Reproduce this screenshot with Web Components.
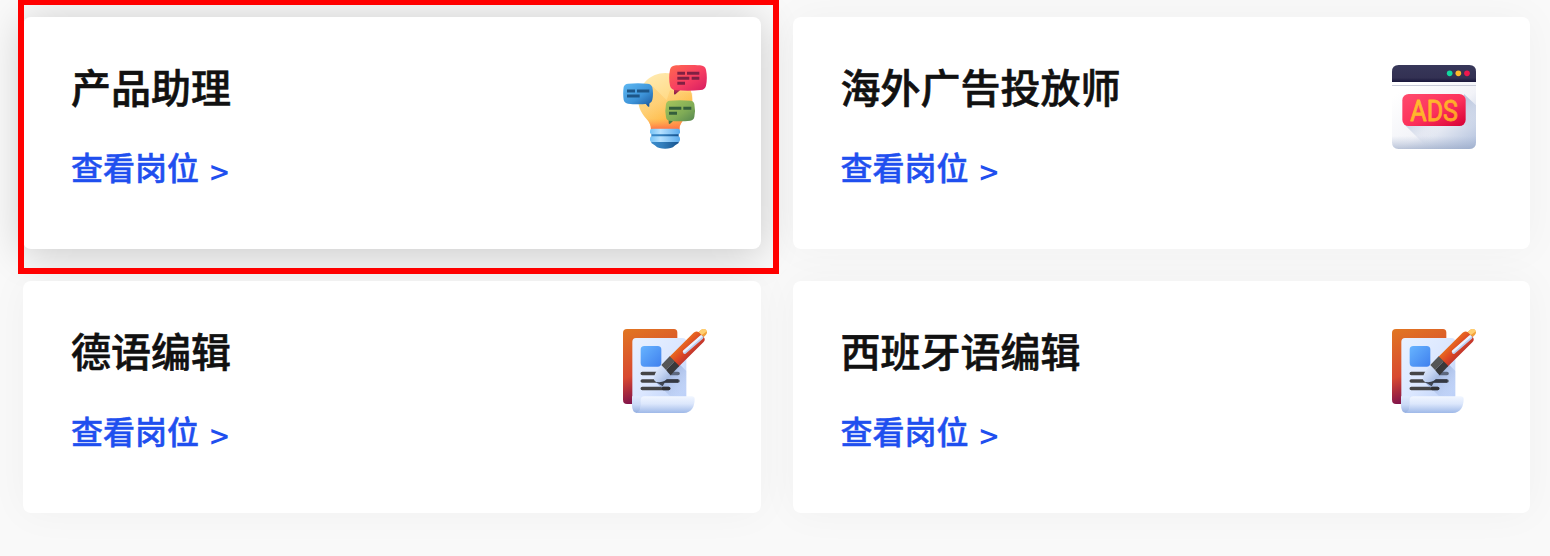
<!DOCTYPE html>
<html lang="zh-CN">
<head>
<meta charset="utf-8">
<title>岗位</title>
<style>
html,body{margin:0;height:556px;overflow:hidden;background:#f9f9f9}
body{font-family:"Noto Sans CJK SC",sans-serif}
</style>
</head>
<body>
<job-board>
  <job-card active><span slot="title">产品助理</span><job-icon slot="icon" kind="idea"></job-icon></job-card>
  <job-card><span slot="title">海外广告投放师</span><job-icon slot="icon" kind="ads"></job-icon></job-card>
  <job-card><span slot="title">德语编辑</span><job-icon slot="icon" kind="edit"></job-icon></job-card>
  <job-card><span slot="title">西班牙语编辑</span><job-icon slot="icon" kind="edit"></job-icon></job-card>
</job-board>

<template id="t-idea">
<svg viewBox="24 21 252 252">
  <defs>
    <linearGradient id="bulb" x1="0.15" y1="0.1" x2="0.65" y2="1"><stop offset="0" stop-color="#ffe9ad"/><stop offset=".45" stop-color="#ffdb8a"/><stop offset=".75" stop-color="#ffc050"/><stop offset="1" stop-color="#ff8a4a"/></linearGradient>
    <linearGradient id="neck" x1="0" y1="0" x2="0" y2="1"><stop offset="0" stop-color="#ff9a50" stop-opacity="0"/><stop offset="1" stop-color="#ff7045"/></linearGradient>
    <linearGradient id="shade" x1="0" y1="0" x2="1" y2="1"><stop offset="0" stop-color="#fdc566" stop-opacity=".5"/><stop offset="1" stop-color="#ffb441" stop-opacity=".15"/></linearGradient>
    <linearGradient id="red" x1="0" y1="0" x2="1" y2="1"><stop offset="0" stop-color="#ff6a4f"/><stop offset=".55" stop-color="#f73e62"/><stop offset="1" stop-color="#d51c62"/></linearGradient>
    <linearGradient id="rtail" x1="0" y1="0" x2="0" y2="1"><stop offset="0" stop-color="#ed4559"/><stop offset="1" stop-color="#7e1749"/></linearGradient>
    <linearGradient id="blue" x1="0" y1="0" x2="1" y2="1"><stop offset="0" stop-color="#5fb9f3"/><stop offset=".6" stop-color="#3d93d8"/><stop offset="1" stop-color="#1e5ca0"/></linearGradient>
    <linearGradient id="green" x1="0" y1="0" x2="1" y2="1"><stop offset="0" stop-color="#a9c75d"/><stop offset=".6" stop-color="#7fab56"/><stop offset="1" stop-color="#568750"/></linearGradient>
    <linearGradient id="ring" x1="0" y1="0" x2="1" y2="0"><stop offset="0" stop-color="#75c2f5"/><stop offset=".35" stop-color="#b6e1ff"/><stop offset="1" stop-color="#5aabed"/></linearGradient>
    <linearGradient id="base" x1="0" y1="0" x2="1" y2="0"><stop offset="0" stop-color="#398acb"/><stop offset=".4" stop-color="#327ebc"/><stop offset="1" stop-color="#17538e"/></linearGradient>
  </defs>
  <path fill="url(#bulb)" d="M151 45C106 45 70 80 70 126C70 151 80 166 94 182C104 193 108 201 108 215H193C193 201 199 193 209 182C224 165 232 149 232 125C232 79 196 45 151 45Z"/>
  <path fill="url(#shade)" d="M112 84L155 127L165 96L232 105V126C232 149 224 165 209 182C199 193 193 201 193 215H108C108 201 104 193 94 182C82 168 75 155 72 140L100 136Z"/>
  <path fill="url(#neck)" d="M94 182H209C199 193 193 201 193 215H108C108 201 104 193 94 182Z"/>
  <path fill="url(#base)" d="M109 220H191V255C187 259 181 260 178 264C170 275 131 275 122 264C119 260 113 259 109 255Z"/>
  <rect x="105" y="212" width="90" height="17" rx="6" fill="url(#ring)"/>
  <rect x="105" y="235" width="90" height="17" rx="6" fill="url(#ring)"/>
  <path fill="url(#rtail)" d="M177 86V106Q177 112 182 108L196 96Z"/>
  <path fill="url(#red)" d="M183 22Q219 19 255 22Q270 23 273 35Q278 59 273 83Q270 95 257 96Q218 100 181 96Q168 95 165 83Q160 59 165 35Q168 23 183 22Z"/>
  <path fill="#1e5ca0" d="M88 132L98 145Q103 149 103 143V133Z"/>
  <path fill="url(#blue)" d="M39 77Q69 74 97 77Q109 78 112 88Q116 107 112 125Q109 136 98 137Q68 141 39 137Q29 136 26 126Q23 106 26 87Q29 78 39 77Z"/>
  <path fill="#467846" d="M161 183V195Q162 201 167 196L178 185Z"/>
  <path fill="url(#green)" d="M164 128Q195 125 227 128Q236 129 238 138Q242 158 238 177Q236 187 226 188Q194 191 163 188Q154 187 153 177Q149 158 153 138Q155 129 164 128Z"/>
  <path stroke="#802043" stroke-width="9" d="M187 45.500H210M216 45.500H253M187 60.500H223M230 60.500H253M187 75.500H210"/>
  <path stroke="#1d5688" stroke-width="9" d="M36 99H60M66 99H103M36 114H74"/>
  <path stroke="#345e3c" stroke-width="9" d="M162 150.500H199M205 150.500H229M162 165.500H186"/>
</svg>
</template>

<template id="t-ads">
<svg viewBox="24 21 252 252">
  <defs>
    <linearGradient id="page" x1="0.15" y1="0.1" x2="1" y2="1"><stop offset="0" stop-color="#fff"/><stop offset=".5" stop-color="#f2f3f8"/><stop offset="1" stop-color="#afbfdc"/></linearGradient>
    <linearGradient id="foot" x1="0" y1="0" x2="0" y2="1"><stop offset="0" stop-color="#a4b4d2" stop-opacity="0"/><stop offset="1" stop-color="#94a4c2" stop-opacity=".6"/></linearGradient>
    <linearGradient id="bar" x1="0" y1="0" x2="0" y2="1"><stop offset="0" stop-color="#373759"/><stop offset=".75" stop-color="#333153"/><stop offset="1" stop-color="#19173b"/></linearGradient>
    <linearGradient id="tag" x1="0" y1="0" x2="1" y2="1"><stop offset="0" stop-color="#ff4b6d"/><stop offset=".55" stop-color="#fc315b"/><stop offset="1" stop-color="#d60035"/></linearGradient>
    <linearGradient id="gold" x1="0" y1="0" x2="1" y2="1"><stop offset="0" stop-color="#ffc52f"/><stop offset="1" stop-color="#ff9c24"/></linearGradient>
    <linearGradient id="fade" gradientUnits="userSpaceOnUse" x1="60" y1="200" x2="130" y2="262"><stop offset="0" stop-color="#c2cce0" stop-opacity=".85"/><stop offset="1" stop-color="#cdd6e8" stop-opacity="0"/></linearGradient>
    <linearGradient id="fade2" gradientUnits="userSpaceOnUse" x1="240" y1="130" x2="276" y2="205"><stop offset="0" stop-color="#bac6de" stop-opacity=".9"/><stop offset="1" stop-color="#bccae2" stop-opacity="0"/></linearGradient>
  </defs>
  <path fill="url(#page)" d="M24 68H276V253Q276 273 256 273H44Q24 273 24 253Z"/>
  <path fill="url(#fade)" d="M59 197L135 273H240V200Z"/>
  <path fill="url(#fade2)" d="M240 108L276 142V220L240 200Z"/>
  <path fill="url(#foot)" d="M24 234H276V253Q276 273 256 273H44Q24 273 24 253Z"/>
  <path fill="url(#bar)" d="M44 21H256Q276 21 276 41V72H24V41Q24 21 44 21Z"/>
  <path stroke="#c8cbd8" stroke-width="3" d="M24 82.500H276"/>
  <circle cx="197" cy="46" r="8.500" fill="#11d9a0"/><circle cx="223" cy="46" r="8.500" fill="#ffba29"/><circle cx="249" cy="46" r="8.500" fill="#ed174e"/>
  <rect x="55" y="108" width="190" height="96" rx="19" fill="url(#tag)"/>
  <text x="79" y="188" textLength="143" lengthAdjust="spacingAndGlyphs" font-family="Roboto,sans-serif" font-weight="400" font-size="90" fill="url(#gold)" stroke="url(#gold)" stroke-width="2.500" stroke-linejoin="round">ADS</text>
</svg>
</template>

<template id="t-edit">
<svg viewBox="24 21 252 252">
  <defs>
    <linearGradient id="back" x1="0.1" y1="0" x2="0.35" y2="1"><stop offset="0" stop-color="#e17522"/><stop offset=".6" stop-color="#d84931"/><stop offset=".78" stop-color="#ab2c3d"/><stop offset="1" stop-color="#730d50"/></linearGradient>
    <linearGradient id="paper" x1="0" y1="0" x2="1" y2="1"><stop offset="0" stop-color="#e8f1ff"/><stop offset=".5" stop-color="#dbe7ff"/><stop offset="1" stop-color="#b8cdf7"/></linearGradient>
    <linearGradient id="roll" x1="0" y1="0" x2="0" y2="1"><stop offset="0" stop-color="#f1f6ff"/><stop offset=".45" stop-color="#dce7fc"/><stop offset="1" stop-color="#9fb9e8"/></linearGradient>
    <linearGradient id="curl" x1="0" y1="0" x2="0" y2="1"><stop offset="0" stop-color="#dfeafd"/><stop offset=".5" stop-color="#cad9f6"/><stop offset="1" stop-color="#92addf"/></linearGradient>
    <linearGradient id="pic" x1="0" y1="0" x2="1" y2="1"><stop offset="0" stop-color="#67b4ff"/><stop offset="1" stop-color="#3f80ee"/></linearGradient>
    <linearGradient id="pen" gradientUnits="userSpaceOnUse" x1="195" y1="65" x2="232" y2="102"><stop offset="0" stop-color="#ea7320"/><stop offset=".5" stop-color="#df4a24"/><stop offset="1" stop-color="#b9302f"/></linearGradient>
    <linearGradient id="nib" x1="0" y1="0" x2="1" y2="1"><stop offset="0" stop-color="#e9f1ff"/><stop offset=".5" stop-color="#c4d4f2"/><stop offset="1" stop-color="#93abd8"/></linearGradient>
    <linearGradient id="drop" gradientUnits="userSpaceOnUse" x1="140" y1="160" x2="205" y2="215"><stop offset="0" stop-color="#6985bd" stop-opacity=".6"/><stop offset="1" stop-color="#a7bfeb" stop-opacity=".05"/></linearGradient>
  </defs>
  <path fill="url(#back)" d="M36 21H177Q187 21 187 32V246H36Q24 246 24 233V33Q24 21 36 21Z"/>
  <path fill="url(#paper)" d="M63 48H202Q214 48 214 60V251H52V60Q52 48 63 48Z"/>
  <rect x="77" y="72" width="62" height="62" rx="11" fill="url(#pic)"/>
  <path stroke="#454547" stroke-width="11" stroke-linecap="round" d="M82 154.500H189M82 177H189M82 199.500H161"/>
  <path fill="url(#drop)" d="M124 182L187 120L214 147V222H165Z"/>
  <path fill="#2d3038" fill-opacity=".85" d="M124 181L149 172H189Q194 177 189 182H149L143 193Z"/>
  <path stroke="#303034" stroke-width="10" stroke-linecap="round" d="M145 199.500H161"/>
  <path fill="url(#curl)" d="M51 223H78V250Q78 273 65 273Q51 271 51 250Z"/>
  <path fill="url(#roll)" d="M88 223H230Q239 223 239 231C239 253 230 273 206 273H64Q77 268 77 250V234Q77 223 88 223Z"/>
  <path fill="url(#nib)" d="M140 131L166 159L157 169Q151 179 133 181L123 180L117 174Q118 152 129 142Z"/>
  <path fill="#f3a23a" d="M246 34L259 23Q267 18 273 24Q279 31 273 38L261 50Z"/>
  <path fill="#ffcf71" d="M251 30L259 23Q267 18 273 24Q278 28 272 31L256 42Z"/>
  <path fill="url(#pen)" d="M162 106L235 33Q243 24 253 32L266 45Q273 53 265 61L190 135Z"/>
  <path fill="#565656" d="M139 129L164 103L179 118L153 144Z"/>
  <path fill="#39393b" d="M153 144L179 118L193 132L167 160Z"/>
  <path stroke="#bdcef0" stroke-width="11" stroke-linecap="round" d="M209 90L260 46"/>
  <path stroke="#eaf2ff" stroke-width="7" stroke-linecap="round" d="M207 88L258 43"/>
</svg>
</template>

<script>
class JobIcon extends HTMLElement {
  connectedCallback() {
    if (this.shadowRoot) return;
    const root = this.attachShadow({mode: 'open'});
    root.innerHTML = '<style>:host{display:block;width:84px;height:84px}svg{display:block;width:100%;height:100%;fill:none}</style>';
    root.append(document.getElementById('t-' + this.getAttribute('kind')).content.cloneNode(true));
  }
}
class JobCard extends HTMLElement {
  constructor() {
    super();
    this.attachShadow({mode: 'open'}).innerHTML = `
<style>
:host{display:flex;box-sizing:border-box;justify-content:space-between;align-items:flex-start;height:232px;padding:45px 54px 0 48px;border-radius:8px;background:#fff;box-shadow:0 0 40px rgba(0,0,0,.04)}
:host([active]){box-shadow:0 4px 40px rgba(0,0,0,.2)}
h2{margin:0;font-size:40px;line-height:48px;font-weight:500;color:#111;-webkit-text-stroke:.6px #111}
a{display:flex;margin-top:32px;font-size:32px;line-height:48px;font-weight:500;color:#1f4fef;text-decoration:none;-webkit-text-stroke:.5px #1f4fef}
.arrow{margin:3px 0 0 11px;padding-top:2px;font-size:33px;-webkit-text-stroke:0}
.icon{padding-top:3px}
</style>
<div><h2><slot name="title"></slot></h2><a href="#"><span>查看岗位</span><span class="arrow">&gt;</span></a></div>
<div class="icon"><slot name="icon"></slot></div>`;
  }
}
class JobBoard extends HTMLElement {
  constructor() {
    super();
    this.attachShadow({mode: 'open'}).innerHTML = `
<style>
:host{display:block;position:relative;box-sizing:border-box;height:556px;padding:17px 20px 0 23px}
.grid{display:grid;grid-template-columns:1fr 1fr;gap:32px}
.mark{position:absolute;left:18px;top:-1px;width:761px;height:275px;box-sizing:border-box;border:6px solid #f00;pointer-events:none}
</style>
<div class="grid"><slot></slot></div><div class="mark"></div>`;
  }
}
customElements.define('job-icon', JobIcon);
customElements.define('job-card', JobCard);
customElements.define('job-board', JobBoard);
</script>
</body>
</html>
